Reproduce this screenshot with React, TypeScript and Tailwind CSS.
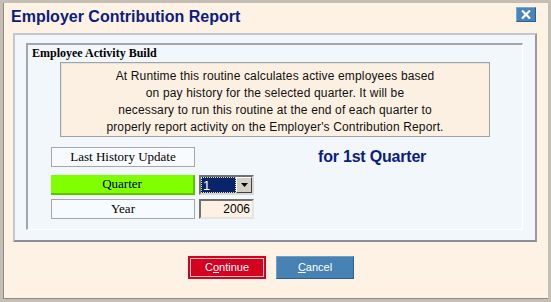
import React from "react";

const serif = { fontFamily: '"Liberation Serif", "Times New Roman", serif' };
const sans = { fontFamily: '"Liberation Sans", Arial, sans-serif' };

function LabelBox({ text, green }: { text: string; green?: boolean }) {
    return (
        <div
            className={
                green
                    ? "w-[144px] h-[20px] flex items-center justify-center bg-[#80ff00] border-r-2 border-b-2 border-[#5fc400] text-[13px] text-black"
                    : "w-[144px] h-[20px] flex items-center justify-center bg-[#f8fbfd] border border-[#a6a6a6] text-[13px] text-black"
            }
            style={serif}
        >
            {text}
        </div>
    );
}

export default function App() {
    return (
        <div className="w-[551px] h-[302px] bg-[#c4beb4] p-[3px]" style={sans}>
            <div className="w-full h-full bg-[#fdf2e4] border-l border-b border-[#8e8a84] flex flex-col">
                {/* Title bar */}
                <div className="h-[30px] flex items-start justify-between pl-[7px] pr-[12px]">
                    <div className="mt-[4px] text-[16px] leading-[20px] font-bold text-[#0c1c84]">
                        Employer Contribution Report
                    </div>
                    <div className="mt-[4px] w-[20px] h-[15px] bg-[#4a84bf] border-t border-l border-[#7aa8d6] border-r border-b border-r-[#2e5e90] border-b-[#2e5e90] flex items-center justify-center">
                        <svg width="10" height="9" viewBox="0 0 10 9">
                            <path d="M1 0.5 L9 8.5 M9 0.5 L1 8.5" stroke="#fff" strokeWidth="2.2" />
                        </svg>
                    </div>
                </div>

                {/* Outer panel */}
                <div className="ml-[9px] w-[524px] h-[209px] bg-[#f2f7fb] border-2 border-t-[#c6c6ce] border-l-[#c6c6ce] border-r-[#9a9aa2] border-b-[#8e8e96] pt-[8px] pl-[11px]">
                    <div className="w-[497px] h-[187px] border-t-2 border-l-2 border-[#a4a4ac] border-r border-b border-r-white border-b-white pl-[4px] pt-[1px]">
                        <div className="text-[12px] leading-[14px] font-bold text-black" style={serif}>
                            Employee Activity Build
                        </div>

                        <div className="ml-[28px] mt-[2px] w-[430px] h-[75px] bg-[#fcf0e2] border border-[#a2a2a2] shadow-[inset_1px_1px_0_#e2e2e2] pt-[5px] text-center text-[12px] leading-[17px] tracking-[0.15px] text-[#111]">
                            At Runtime this routine calculates active employees based
                            <br />
                            on pay history for the selected quarter. It will be
                            <br />
                            necessary to run this routine at the end of each quarter to
                            <br />
                            properly report activity on the Employer's Contribution Report.
                        </div>

                        <div className="ml-[19px] mt-[10px] flex flex-col">
                            <div className="flex items-center">
                                <LabelBox text="Last History Update" />
                                <div className="ml-[123px] text-[16px] leading-[20px] font-bold tracking-[-0.2px] text-[#0c1c84]">
                                    for 1st Quarter
                                </div>
                            </div>

                            <div className="flex items-center mt-[8px]">
                                <LabelBox text="Quarter" green />
                                <div className="ml-[4px] w-[55px] h-[20px] border-2 border-t-[#707070] border-l-[#707070] border-r-[#d8d8d8] border-b-[#d8d8d8] flex">
                                    <div className="flex-1 bg-[#0a246a] border border-dotted border-[#f0e0a0] flex items-center pl-[1px] text-white text-[13px] leading-none">
                                        1
                                    </div>
                                    <div className="w-[16px] bg-[#d4d0c8] border border-t-white border-l-white border-r-[#404040] border-b-[#404040] flex items-center justify-center">
                                        <svg width="7" height="4" viewBox="0 0 7 4">
                                            <path d="M0 0 H7 L3.5 4 Z" fill="#000" />
                                        </svg>
                                    </div>
                                </div>
                            </div>

                            <div className="flex items-center mt-[4px]">
                                <LabelBox text="Year" />
                                <div className="ml-[4px] w-[55px] h-[20px] bg-[#fcf1e3] border-2 border-t-[#707070] border-l-[#707070] border-r-[#e4e4e4] border-b-[#e4e4e4] flex items-center justify-end pr-[2px] text-[12px] text-black">
                                    2006
                                </div>
                            </div>
                        </div>
                    </div>
                </div>

                {/* Buttons */}
                <div className="mt-[14px] ml-[184px] flex gap-[10px]">
                    <button className="w-[78px] h-[23px] bg-[#d6001f] p-[2px]">
                        <div className="w-full h-full border border-[#c8c8c8] flex items-center justify-center text-white text-[11px]">
                            C<span className="underline">o</span>ntinue
                        </div>
                    </button>
                    <button className="w-[78px] h-[23px] bg-[#4682b4] border border-t-[#6fa0cc] border-l-[#6fa0cc] border-r-[#2d5f8c] border-b-[#2d5f8c] flex items-center justify-center text-white text-[11px]">
                        <span className="underline">C</span>ancel
                    </button>
                </div>
            </div>
        </div>
    );
}
